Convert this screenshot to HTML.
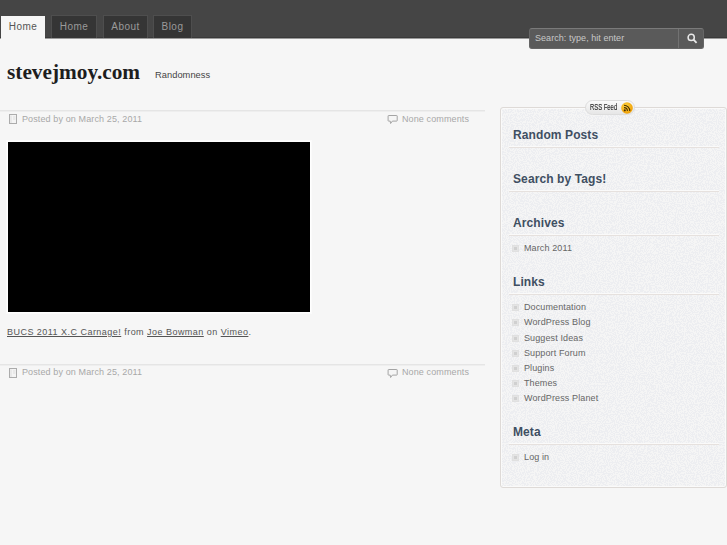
<!DOCTYPE html>
<html><head><meta charset="utf-8">
<style>
*{margin:0;padding:0;box-sizing:border-box}
html,body{width:727px;height:545px;overflow:hidden}
body{background:#f6f6f6;font-family:"Liberation Sans",sans-serif;position:relative}
.a{position:absolute;white-space:nowrap}
#bar{left:0;top:0;width:727px;height:38px;background:#454545;border-bottom:1px solid #3a3a3a;box-shadow:0 1px 0 #9a9a9a}
.tab{top:15px;height:23px;background:#353535;border:1px solid #4e4e4e;border-bottom:none;color:#9a9a9a;font-size:10px;line-height:22px;text-align:center;letter-spacing:0.45px}
.tab.on{background:#f6f6f6;border:none;color:#555;line-height:21px;height:23px;top:16px}
#search{left:529px;top:28px;width:175px;height:21px;background:#5a5a5a;border:1px solid #666;border-top-color:#7a7a7a;border-radius:3px}
#search .txt{left:5px;top:0px;font-size:9px;line-height:19px;color:#c8c8c8;letter-spacing:0.05px}
#search .div{left:148px;top:0;width:1px;height:19px;background:#727272}
#title{left:7px;top:60px;font-family:"Liberation Serif",serif;font-weight:bold;font-size:21.3px;line-height:24px;color:#1e1e1e}
#tag{left:155px;top:69px;font-size:9.3px;line-height:12px;color:#444;letter-spacing:0.04px}
.hr{height:2px;border-top:1px solid #e5e5e5;background:#eeeeee}
.meta{font-size:9px;line-height:12px;color:#a8a8a8}
#video{left:7px;top:141px;width:304px;height:172px;background:#000;border:1px solid #fff;box-shadow:0 0 0 1px #fbfbfb}
#ptxt{left:7px;top:326px;font-size:9px;line-height:12px;color:#555;letter-spacing:0.47px}
#ptxt u{color:#555}
#side{left:500px;top:107px;width:227px;height:381px;background:#f1f1f2;border:1px solid #dedad7;border-radius:3px;box-shadow:inset 0 0 0 1px #fafafa}
.h{left:12px;font-size:12px;font-weight:bold;line-height:14px;color:#3f4f62;letter-spacing:0.1px}
.sl{left:8px;width:210px;height:1px;background:#e6e1de;box-shadow:0 -1px 0 #fafafa}
.li{left:23px;font-size:9px;line-height:12px;color:#666;letter-spacing:0.12px}
.bl{left:11px;width:7px;height:7px;margin-top:-1px;background:#e4e4e4;border:1px solid #e0e0e0}
.bl:after{content:"";position:absolute;left:1px;top:1px;width:3px;height:3px;background:#d0d0d0}
#rss{left:585px;top:100px;width:50px;height:15px;border-radius:8px;background:linear-gradient(#fafafa,#e6e6e6);border:1px solid #ddd}
#rss .t{left:4px;top:-1px;font-size:9.5px;line-height:13px;color:#2a2a2a;transform:scaleX(0.62);transform-origin:0 0;-webkit-text-stroke:0.15px #2a2a2a}
#rss .c{left:35px;top:1px;width:12px;height:12px;border-radius:50%;background:radial-gradient(circle at 40% 35%,#ffd84a,#f0a800)}
</style></head><body>
<div class="a" id="bar"></div>
<div class="a tab on" style="left:1px;width:44px">Home</div>
<div class="a tab" style="left:51px;width:46px">Home</div>
<div class="a tab" style="left:103px;width:45px">About</div>
<div class="a tab" style="left:153px;width:39px">Blog</div>
<div class="a" id="search"><div class="a txt">Search: type, hit enter</div><div class="a div"></div>
<svg class="a" style="left:157px;top:4px" width="12" height="12" viewBox="0 0 12 12"><circle cx="4.2" cy="4.4" r="3.1" fill="none" stroke="#e8e8e8" stroke-width="1.5"/><line x1="6.5" y1="6.7" x2="9.6" y2="9.8" stroke="#e8e8e8" stroke-width="1.9"/></svg>
</div>

<div class="a" id="title">stevejmoy.com</div>
<div class="a" id="tag">Randomness</div>

<div class="a hr" style="left:0;top:110px;width:485px"></div>
<svg class="a" style="left:9px;top:114px" width="9" height="10" viewBox="0 0 9 10"><rect x="0.5" y="0.5" width="7" height="9" fill="#f4f4f4" stroke="#acacac"/><path d="M2 1.5v7.5M4 3h2.5M4 5h2.5" stroke="#dedede" stroke-width="1"/></svg>
<div class="a meta" style="left:22px;top:113px;letter-spacing:0.12px">Posted by on March 25, 2011</div>
<svg class="a" style="left:387px;top:114px" width="12" height="11" viewBox="0 0 12 11"><path d="M1.6 1.5H9.7Q10.2 1.5 10.2 2V6.6Q10.2 7.1 9.7 7.1H5.4L3.6 9.5L3.2 7.1H1.6Q1.1 7.1 1.1 6.6V2Q1.1 1.5 1.6 1.5Z" fill="#f5f5f5" stroke="#a4a4a4" stroke-linejoin="round"/></svg>
<div class="a meta" style="left:402px;top:113px;letter-spacing:0.12px">None comments</div>

<div class="a" id="video"></div>
<div class="a" id="ptxt"><u>BUCS 2011 X.C Carnage!</u> from <u>Joe Bowman</u> on <u>Vimeo</u>.</div>

<div class="a hr" style="left:0;top:364px;width:485px"></div>
<svg class="a" style="left:9px;top:368px" width="9" height="10" viewBox="0 0 9 10"><rect x="0.5" y="0.5" width="7" height="9" fill="#f4f4f4" stroke="#acacac"/><path d="M2 1.5v7.5M4 3h2.5M4 5h2.5" stroke="#dedede" stroke-width="1"/></svg>
<div class="a meta" style="left:22px;top:366px;letter-spacing:0.12px">Posted by on March 25, 2011</div>
<svg class="a" style="left:387px;top:368px" width="12" height="11" viewBox="0 0 12 11"><path d="M1.6 1.5H9.7Q10.2 1.5 10.2 2V6.6Q10.2 7.1 9.7 7.1H5.4L3.6 9.5L3.2 7.1H1.6Q1.1 7.1 1.1 6.6V2Q1.1 1.5 1.6 1.5Z" fill="#f5f5f5" stroke="#a4a4a4" stroke-linejoin="round"/></svg>
<div class="a meta" style="left:402px;top:366px;letter-spacing:0.12px">None comments</div>

<div class="a" id="side">
<svg class="a" style="left:1px;top:1px" width="223" height="377"><filter id="nz" x="0" y="0" width="100%" height="100%" color-interpolation-filters="sRGB"><feTurbulence type="fractalNoise" baseFrequency="0.9" numOctaves="1" seed="3"/><feColorMatrix type="matrix" values="0 0 0 0 0.93  0 0 0 0 0.935  0 0 0 0 0.945  2 0 0 0 -0.5"/><feComponentTransfer><feFuncA type="discrete" tableValues="0 1"/></feComponentTransfer></filter><rect width="223" height="377" fill="#f5f5f5"/><rect width="223" height="377" filter="url(#nz)"/></svg>
<div class="a h" style="top:20px">Random Posts</div><div class="a sl" style="top:39px"></div>
<div class="a h" style="top:64px">Search by Tags!</div><div class="a sl" style="top:83px"></div>
<div class="a h" style="top:108px">Archives</div><div class="a sl" style="top:127px"></div>
<div class="a bl" style="top:138px"></div><div class="a li" style="top:134px">March 2011</div>
<div class="a h" style="top:167px">Links</div><div class="a sl" style="top:186px"></div>
<div class="a bl" style="top:197px"></div><div class="a li" style="top:193px">Documentation</div>
<div class="a bl" style="top:212px"></div><div class="a li" style="top:208px">WordPress Blog</div>
<div class="a bl" style="top:228px"></div><div class="a li" style="top:224px">Suggest Ideas</div>
<div class="a bl" style="top:243px"></div><div class="a li" style="top:239px">Support Forum</div>
<div class="a bl" style="top:258px"></div><div class="a li" style="top:254px">Plugins</div>
<div class="a bl" style="top:273px"></div><div class="a li" style="top:269px">Themes</div>
<div class="a bl" style="top:288px"></div><div class="a li" style="top:284px">WordPress Planet</div>
<div class="a h" style="top:317px">Meta</div><div class="a sl" style="top:336px"></div>
<div class="a bl" style="top:347px"></div><div class="a li" style="top:343px">Log in</div>
</div>
<div class="a" id="rss"><div class="a t">RSS Feed</div><svg class="a c2" style="left:35px;top:1px" width="12" height="12" viewBox="0 0 12 12"><defs><radialGradient id="rg" cx="40%" cy="35%" r="70%"><stop offset="0" stop-color="#ffd640"/><stop offset="1" stop-color="#ee9a00"/></radialGradient></defs><circle cx="6" cy="6" r="5.8" fill="url(#rg)"/><circle cx="3.8" cy="8.3" r="1.1" fill="#4a3000"/><path d="M3 5.6a3.4 3.4 0 0 1 3.4 3.4" fill="none" stroke="#4a3000" stroke-width="1.1"/><path d="M3 3.2a5.8 5.8 0 0 1 5.8 5.8" fill="none" stroke="#4a3000" stroke-width="1.1"/></svg></div>
</body></html>
